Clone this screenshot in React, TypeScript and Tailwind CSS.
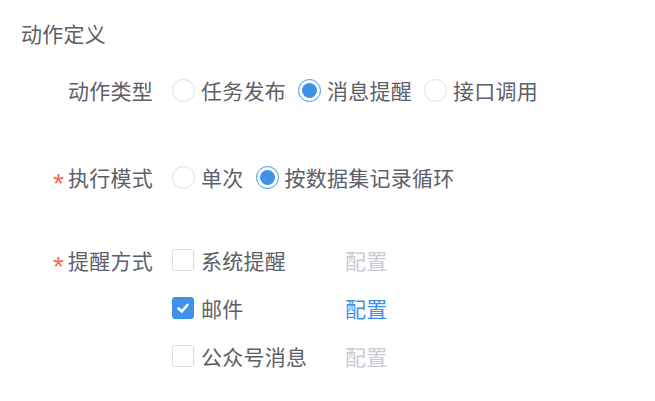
import React from "react";

const FONT = { fontFamily: '"Noto Sans CJK SC", "Noto Sans", sans-serif' };

function Radio({ checked, label }: { checked?: boolean; label: string }) {
  return (
    <div className="flex items-center mr-[12px]">
      {checked ? (
        <span className="w-[23px] h-[23px] rounded-full border border-[#4091ea] flex items-center justify-center bg-white">
          <span className="w-[15px] h-[15px] rounded-full bg-[#4091ea]" />
        </span>
      ) : (
        <span className="w-[23px] h-[23px] rounded-full border border-[#dcdfe6] bg-white" />
      )}
      <span className="ml-[6px] text-[21px] leading-[30px] tracking-[0.25px] text-[#5c6069]">{label}</span>
    </div>
  );
}

function Checkbox({ checked, label, active }: { checked?: boolean; label: string; active?: boolean }) {
  return (
    <div className="flex items-center h-[40px]">
      <div className="flex items-center w-[173px]">
        {checked ? (
          <span className="w-[22px] h-[22px] rounded-[3px] bg-[#4091ea] flex items-center justify-center">
            <svg width="14" height="14" viewBox="0 0 14 14">
              <polyline points="2.5,7.5 5.8,10.5 11.5,3.8" fill="none" stroke="white" strokeWidth="2.6" strokeLinecap="round" strokeLinejoin="round" />
            </svg>
          </span>
        ) : (
          <span className="w-[22px] h-[22px] rounded-[3px] border border-[#d9dce3] bg-white" />
        )}
        <span className="ml-[7px] text-[21px] leading-[30px] tracking-[0.25px] text-[#5c6069]">{label}</span>
      </div>
      <span className={"text-[21px] leading-[30px] tracking-[0.25px] " + (active ? "text-[#3f8fe9]" : "text-[#c8cbd1]")}>配置</span>
    </div>
  );
}

function Label({ text, required }: { text: string; required?: boolean }) {
  return (
    <div className="w-[153px] flex justify-end items-center h-[40px] shrink-0">
      {required && (
        <span className="text-[#ef6a52] text-[28px] leading-none mr-[4px] translate-y-[7px]" style={{ fontFamily: '"Liberation Sans", sans-serif' }}>
          *
        </span>
      )}
      <span className="text-[21px] leading-[30px] tracking-[0.25px] text-[#5c6069]">{text}</span>
    </div>
  );
}

export default function App() {
  return (
    <div className="w-[655px] h-[401px] bg-white pt-[18px]" style={FONT}>
      <div className="pl-[21px] h-[30px] text-[21px] leading-[30px] tracking-[0.25px] text-[#5a5e66]">动作定义</div>

      <div className="flex mt-[22px]">
        <Label text="动作类型" />
        <div className="flex items-center ml-[19px] h-[40px]">
          <Radio label="任务发布" />
          <Radio checked label="消息提醒" />
          <Radio label="接口调用" />
        </div>
      </div>

      <div className="flex mt-[47px]">
        <Label text="执行模式" required />
        <div className="flex items-center ml-[19px] h-[40px]">
          <Radio label="单次" />
          <Radio checked label="按数据集记录循环" />
        </div>
      </div>

      <div className="flex mt-[43px]">
        <Label text="提醒方式" required />
        <div className="flex flex-col ml-[19px] gap-[8px]">
          <Checkbox label="系统提醒" />
          <Checkbox checked active label="邮件" />
          <Checkbox label="公众号消息" />
        </div>
      </div>
    </div>
  );
}
